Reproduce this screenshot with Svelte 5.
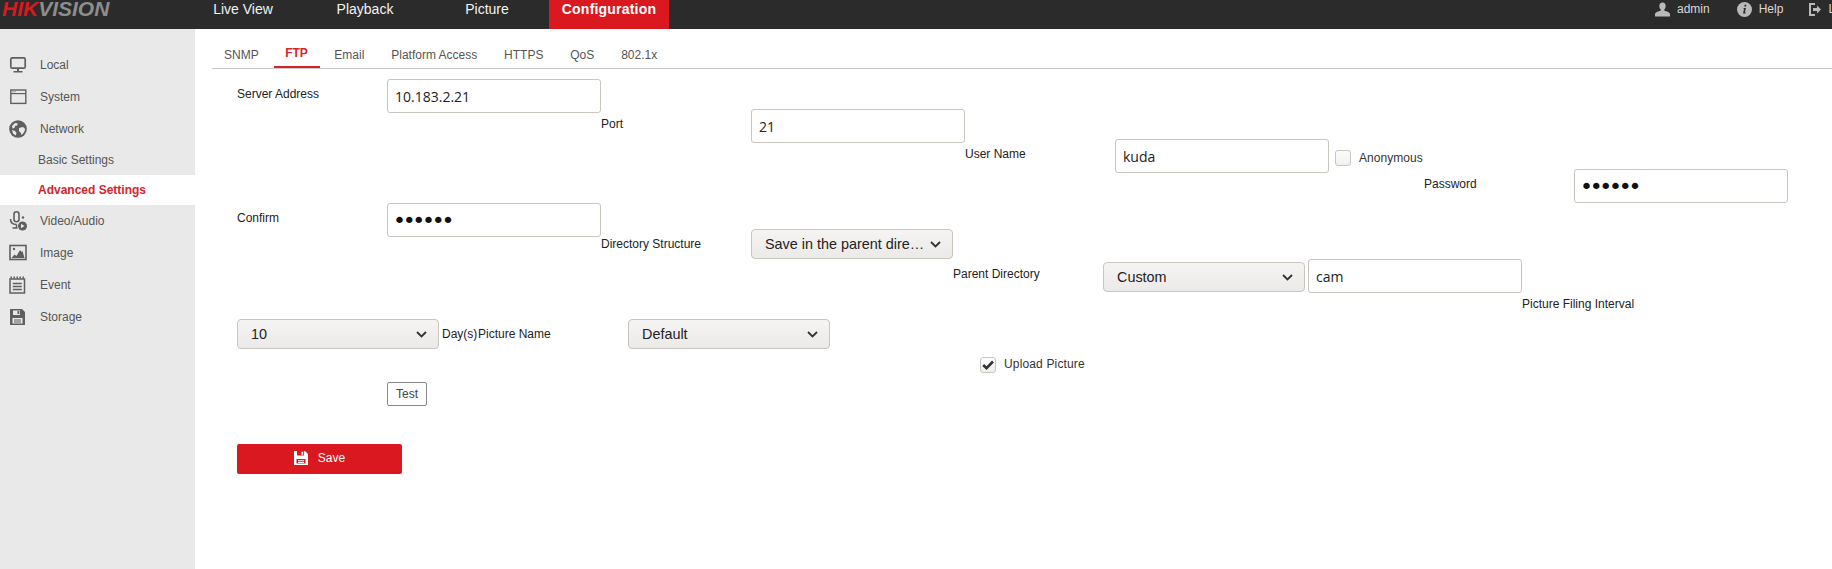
<script>
  const tabs = ['SNMP', 'FTP', 'Email', 'Platform Access', 'HTTPS', 'QoS', '802.1x'];
  const nav = ['Live View', 'Playback', 'Picture', 'Configuration'];
</script>

<div class="page">
  <header class="top">
    <div class="logo"><span class="hik">HIK</span><span class="vision">VISION</span></div>
    <nav class="nav">
      {#each nav as n, i}
        <span class="nav-item" class:on={i === 3}>{n}</span>
      {/each}
    </nav>
    <div class="user">
      <span class="u-item first">
        <svg width="15" height="15" viewBox="0 0 16 15"><path fill="#b9b9b9" d="M8 0c2.200 0 3.400 1.500 3.400 3.700 0 1.500-.6 2.800-1.400 3.600v1.500c2.500.6 5.300 1.500 6 3.200v3H0v-3c.7-1.700 3.500-2.600 6-3.200V7.300C5.200 6.500 4.600 5.200 4.600 3.700 4.600 1.500 5.800 0 8 0z"/></svg>
        admin
      </span>
      <span class="u-item">
        <svg width="15" height="15" viewBox="0 0 15 15"><circle cx="7.500" cy="7.500" r="7.500" fill="#b9b9b9"/><path fill="#2b2b2b" d="M7.600 2.800h1.800l-.3 1.700H7.300zM7 6h1.900l-1 4.600h.9l-.2 1H6l1-4.600h-.8z"/></svg>
        Help
      </span>
      <span class="u-item">
        <svg width="12" height="13" viewBox="0 0 12 13"><path fill="#b9b9b9" d="M0 0h6v2H2v9h4v2H0z"/><path fill="#b9b9b9" d="M4 5h4V2.500L12 6.500l-4 4V8H4z"/></svg>
        Logout
      </span>
    </div>
  </header>

  <div class="body">
    <aside class="side">
      <div class="s-item">
        <svg class="ic" viewBox="0 0 18 18"><rect x="1.800" y="1.800" width="14.400" height="10.400" rx="1.500" fill="none" stroke="#5f5f5f" stroke-width="1.700"/><path fill="#5f5f5f" d="M8 13h2v2H8zM4.500 15h9v1.500h-9z"/></svg>
        <span>Local</span>
      </div>
      <div class="s-item">
        <svg class="ic" viewBox="0 0 18 18"><rect x="1.800" y="2" width="15" height="13.400" fill="none" stroke="#5f5f5f" stroke-width="1.400"/><path stroke="#5f5f5f" stroke-width="1.200" d="M2 5.600h15"/><path stroke="#5f5f5f" stroke-width="1" stroke-dasharray="1 1" d="M3.500 3.800h4"/></svg>
        <span>System</span>
      </div>
      <div class="s-item">
        <svg class="ic" viewBox="0 0 18 18"><circle cx="9" cy="9" r="8.800" fill="#5f5f5f"/><path fill="#e9e9e9" d="M3 6l3-3 3 .5-1 2-2 .5-.5 2-2 .5zM10 8l4-1 2.200 2-1 3-2.500 3-1.200-2.500-1.500-1.500zM3 10l3 1 1.500 2-.7 2.500L4 13.500z"/></svg>
        <span>Network</span>
      </div>
      <div class="s-sub">Basic Settings</div>
      <div class="s-sub on">Advanced Settings</div>
      <div class="s-item">
        <svg class="ic tall" viewBox="0 0 18 20"><rect x="5" y="0.800" width="5" height="10" rx="2.500" fill="none" stroke="#5f5f5f" stroke-width="1.600"/><path fill="none" stroke="#5f5f5f" stroke-width="1.500" d="M1.500 8c0 3.500 2.500 5.500 6 5.500M7.500 13.500v3M3.500 17h5"/><circle cx="14" cy="6.500" r="1.200" fill="#5f5f5f"/><circle cx="13.500" cy="15" r="4.500" fill="#5f5f5f"/><path fill="#e9e9e9" d="M12 12.800l3.500 2.200-3.500 2.200z"/></svg>
        <span>Video/Audio</span>
      </div>
      <div class="s-item">
        <svg class="ic" viewBox="0 0 18 18"><rect x="1" y="1.500" width="16" height="14" fill="none" stroke="#5f5f5f" stroke-width="1.600"/><circle cx="5" cy="5" r="1.200" fill="#5f5f5f"/><path fill="#5f5f5f" d="M2.500 14l3-3.500 2 1.500 3.500-6 1.500 2 1-1 2 7z"/></svg>
        <span>Image</span>
      </div>
      <div class="s-item">
        <svg class="ic" viewBox="0 0 18 18"><rect x="1" y="3" width="14.500" height="14" fill="none" stroke="#5f5f5f" stroke-width="1.500"/><path stroke="#5f5f5f" stroke-width="1.500" d="M3.800 7.500h9M3.800 10.500h9M3.800 13.500h9"/><path stroke="#5f5f5f" stroke-width="2" stroke-dasharray="1.500 1.500" d="M1.500 1.500h14"/></svg>
        <span>Event</span>
      </div>
      <div class="s-item">
        <svg class="ic" viewBox="0 0 18 18"><path fill="#5f5f5f" d="M1 1h12l3 3v13H1z"/><path fill="#e9e9e9" d="M4 2.500h7v4.500H4zM3.500 10h10v5.500h-10z"/><path fill="#5f5f5f" d="M8.500 3h1.800v3H8.500zM5 11.500h7v1H5zM5 13.500h7v1H5z"/></svg>
        <span>Storage</span>
      </div>
    </aside>

    <main class="main">
      <div class="tabs">
        {#each tabs as t, i}
          <span class="tab" class:on={i === 1}>{t}</span>
        {/each}
      </div>

      <form class="form" onsubmit={(e) => e.preventDefault()}>
        <div class="row"><span class="lab">Server Address</span><div class="ctl"><input class="inp" value="10.183.2.21" /></div></div>
        <div class="row"><span class="lab">Port</span><div class="ctl"><input class="inp" value="21" /></div></div>
        <div class="row"><span class="lab">User Name</span><div class="ctl w-user"><input class="inp" value="kuda" /><span class="chk anon"></span><span class="chk-t">Anonymous</span></div></div>
        <div class="row"><span class="lab">Password</span><div class="ctl"><input class="inp pw" type="password" value="123456" /></div></div>
        <div class="row"><span class="lab">Confirm</span><div class="ctl"><input class="inp pw" type="password" value="123456" /></div></div>
        <div class="row"><span class="lab">Directory Structure</span><div class="ctl"><div class="sel"><span class="sel-t">Save in the parent directory</span><svg class="chev" width="11" height="7" viewBox="0 0 11 7"><path fill="none" stroke="#333" stroke-width="1.800" d="M1 1l4.500 4.500L10 1"/></svg></div></div></div>
        <div class="row"><span class="lab">Parent Directory</span><div class="ctl"><div class="sel low"><span class="sel-t">Custom</span><svg class="chev" width="11" height="7" viewBox="0 0 11 7"><path fill="none" stroke="#333" stroke-width="1.800" d="M1 1l4.500 4.500L10 1"/></svg></div><input class="inp gap" value="cam" /></div></div>
        <div class="row"><span class="lab">Picture Filing Interval</span><div class="ctl w-days"><div class="sel"><span class="sel-t">10</span><svg class="chev" width="11" height="7" viewBox="0 0 11 7"><path fill="none" stroke="#333" stroke-width="1.800" d="M1 1l4.500 4.500L10 1"/></svg></div><span class="unit">Day(s)</span></div></div>
        <div class="row"><span class="lab">Picture Name</span><div class="ctl"><div class="sel"><span class="sel-t">Default</span><svg class="chev" width="11" height="7" viewBox="0 0 11 7"><path fill="none" stroke="#333" stroke-width="1.800" d="M1 1l4.500 4.500L10 1"/></svg></div></div></div>
        <div class="row"><span class="lab"></span><div class="ctl short"><span class="chk up"><svg width="12" height="10" viewBox="0 0 12 10"><path fill="none" stroke="#333" stroke-width="2.600" d="M1.200 5l3.300 3.200L11 1.500"/></svg></span><span class="chk-t">Upload Picture</span></div></div>
        <div class="row"><span class="lab"></span><div class="ctl short"><button type="button" class="test">Test</button></div></div>
        <button type="button" class="save">
          <svg width="14" height="14" viewBox="0 0 14 14"><path fill="#fff" d="M0 0h11l3 3v11H0z"/><path fill="#d9181f" d="M3 0h7v4.500H3zM2.500 8h9v4.500h-9z"/><path fill="#fff" d="M7.500 .8h1.700v3H7.500zM4 9.200h6v1H4zM4 11h6v1H4z"/></svg>
          Save
        </button>
      </form>
    </main>
  </div>
</div>

<style>
  :global(body) { margin: 0; background: #fff; overflow: hidden; }
  .page { width: 1832px; height: 569px; overflow: hidden; font-family: "Liberation Sans", Arial, sans-serif; display: flex; flex-direction: column; }

  .top { height: 29px; flex: none; background: #2b2b2b; display: flex; }
  .logo { width: 183px; flex: none; font-size: 21px; font-weight: bold; font-style: italic; line-height: 21px; margin-top: -2px; padding-left: 2px; box-sizing: border-box; }
  .hik { color: #d9181f; }
  .vision { color: #8d8d8d; }
  .nav { display: flex; gap: 2px; flex: none; }
  .nav-item { width: 120px; height: 29px; line-height: 18px; text-align: center; color: #f2f2f2; font-size: 14px; }
  .nav-item.on { background: #d9181f; color: #fff; font-weight: bold; letter-spacing: 0.2px; }
  .user { display: flex; margin-left: 986px; flex: none; color: #d8d8d8; font-size: 12px; gap: 26px; height: 18px; }
  .u-item { display: flex; align-items: center; gap: 7px; line-height: 18px; }
  .u-item.first { margin-right: 1px; }

  .body { flex: 1; display: flex; min-height: 0; }
  .side { width: 195px; flex: none; background: #e9e9e9; padding-top: 20px; box-sizing: border-box; }
  .s-item { height: 32px; display: flex; align-items: center; padding-left: 9px; font-size: 12px; color: #555; }
  .s-item span { margin-left: 13px; }
  .ic { width: 18px; height: 18px; flex: none; }
  .ic.tall { height: 20px; }
  .s-sub { height: 30px; line-height: 30px; padding-left: 38px; font-size: 12px; color: #555; }
  .s-sub.on { background: #fff; color: #d9232a; font-weight: bold; }

  .main { flex: 1; min-width: 0; }
  .tabs { margin-left: 17px; height: 40px; box-sizing: border-box; border-bottom: 1px solid #c9c9c9; display: flex; gap: 2.850px; padding-top: 17px; }
  .tab { height: 22px; padding: 0 12px; font-size: 12px; line-height: 18px; color: #555; }
  .tab.on { width: 46px; box-sizing: border-box; padding: 0; text-align: center; color: #d9232a; font-weight: bold; border-bottom: 2px solid #d9232a; line-height: 15px; }

  .form { margin: 10px 0 0 42px; }
  .row { height: 30px; font-size: 12px; color: #222; }
  .lab { float: left; width: 150px; height: 30px; line-height: 31px; }
  .ctl { float: left; min-height: 34px; white-space: nowrap; }
  .ctl.short { min-height: 30px; }
  .ctl.w-user { width: 309px; }
  .ctl.w-days { width: 241px; }
  .inp { width: 214px; height: 34px; box-sizing: border-box; border: 1px solid #c9c5bf; border-radius: 3px; padding: 0 7px; margin: 0; font-family: "Open Sans", sans-serif; font-size: 14px; color: #222; background: #fff; outline: none; display: inline-block; vertical-align: top; }
  .inp.pw { font-family: "DejaVu Sans", sans-serif; font-size: 22px; letter-spacing: -3.300px; padding-left: 5px; color: #111; }
  .inp.gap { margin-left: 3px; }
  .sel { display: inline-flex; align-items: center; width: 202px; height: 30px; box-sizing: border-box; border: 1px solid #c9c5bf; border-radius: 4px; padding: 0 11px 0 13px; background: linear-gradient(#f5f4f3, #eceae8); font-size: 14.400px; color: #222; vertical-align: top; }
  .sel.low { margin-top: 3px; }
  .sel-t { flex: 1; min-width: 0; overflow: hidden; text-overflow: ellipsis; white-space: nowrap; }
  .chev { flex: none; margin-left: 4px; }
  .unit { display: inline-block; margin-left: 3px; line-height: 31px; vertical-align: top; }
  .chk { display: inline-flex; align-items: center; justify-content: center; width: 16px; height: 16px; box-sizing: border-box; border: 1px solid #c9c5bf; border-radius: 3px; background: linear-gradient(#fdfdfd, #f1f0ee); vertical-align: top; }
  .chk.anon { margin: 11px 0 0 6px; }
  .chk.up { margin-top: 8px; }
  .chk-t { display: inline-block; margin-left: 8px; vertical-align: top; line-height: 38px; color: #333; letter-spacing: 0.05px; }
  .up + .chk-t { line-height: 30px; letter-spacing: 0.15px; }
  .test { margin: 3px 0 0; height: 24px; padding: 0 8px; box-sizing: border-box; border: 1px solid #8a8a8a; border-radius: 2px; background: #fff; font: 12px "Liberation Sans", sans-serif; color: #444; }
  .save { clear: both; display: flex; align-items: center; justify-content: center; gap: 10px; width: 165px; height: 30px; border: 0; border-radius: 2px; background: #d9181f; color: #fff; font: 12px "Liberation Sans", sans-serif; margin: 35px 0 0; padding: 0 0 2px; }
</style>
